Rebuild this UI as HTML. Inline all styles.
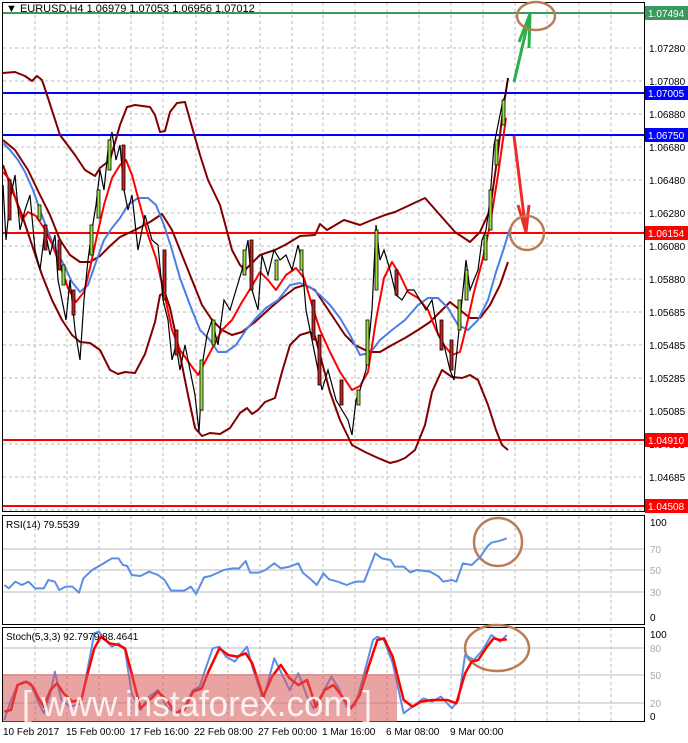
<!DOCTYPE html>
<html><head><meta charset="utf-8"><style>
html,body{margin:0;padding:0;background:#fff;}
body{width:688px;height:743px;position:relative;overflow:hidden;font-family:"Liberation Sans",sans-serif;}
svg{position:absolute;left:0;top:0;}
text{font-family:"Liberation Sans",sans-serif;}
</style></head><body>
<svg width="688" height="743" viewBox="0 0 688 743">
<rect x="2.5" y="2.5" width="642" height="509" fill="#fff" stroke="#000"/>
<rect x="2.5" y="515.5" width="642" height="109" fill="#fff" stroke="#000"/>
<rect x="2.5" y="627.5" width="642" height="94" fill="#fff" stroke="#000"/>
<g stroke="#bbb" stroke-dasharray="3,3" stroke-width="1">
<path d="M35 3V511M67 3V511M99 3V511M131 3V511M163 3V511M196 3V511M228 3V511M260 3V511M292 3V511M323 3V511M355 3V511M387 3V511M419 3V511M451 3V511M483 3V511M515 3V511M547 3V511M579 3V511M611 3V511"/>
<path d="M3 48H644M3 81H644M3 114H644M3 147H644M3 180H644M3 213H644M3 246H644M3 279H644M3 312H644M3 345H644M3 378H644M3 411H644M3 444H644M3 477H644M3 510H644"/>
<path d="M35 516V624M67 516V624M99 516V624M131 516V624M163 516V624M196 516V624M228 516V624M260 516V624M292 516V624M323 516V624M355 516V624M387 516V624M419 516V624M451 516V624M483 516V624M515 516V624M547 516V624M579 516V624M611 516V624"/>
<path d="M35 628V721M67 628V721M99 628V721M131 628V721M163 628V721M196 628V721M228 628V721M260 628V721M292 628V721M323 628V721M355 628V721M387 628V721M419 628V721M451 628V721M483 628V721M515 628V721M547 628V721M579 628V721M611 628V721"/>
</g>
<g stroke="#bbb" stroke-width="1">
<path d="M3 549H644M3 570H644M3 592H644M3 648H644M3 675H644M3 703H644"/>
</g>
<line x1="3" y1="13" x2="644" y2="13" stroke="#3a9a5e" stroke-width="2"/>
<line x1="3" y1="93" x2="644" y2="93" stroke="#0000ff" stroke-width="2"/>
<line x1="3" y1="135" x2="644" y2="135" stroke="#0000ff" stroke-width="2"/>
<line x1="3" y1="233" x2="644" y2="233" stroke="#ff0000" stroke-width="2"/>
<line x1="3" y1="440" x2="644" y2="440" stroke="#ff0000" stroke-width="2"/>
<line x1="3" y1="506" x2="644" y2="506" stroke="#ff0000" stroke-width="2"/>
<g fill="none" stroke-width="2" stroke-linejoin="round">
<polyline stroke="#800000" points="3,73 15,72 25,76 32,81 37,76 42,80 47,95 60,135 75,155 85,170 95,176 100,168 110,160 120,125 127,107 135,105 150,107 155,115 160,132 165,131 170,112 177,103 185,102 190,120 200,155 208,180 220,205 232,250 240,265 245,270 260,255 275,250 285,245 300,236 315,235 320,224 327,230 344,220 360,225 372,220 385,215 395,212 410,205 425,198 440,215 455,232 470,242 480,232 490,210 497,160 503,110 508,78"/>
<polyline stroke="#800000" points="3,140 15,150 28,170 40,195 50,215 60,240 70,255 80,262 90,262 100,256 110,246 120,237 135,230 150,222 162,214 172,230 182,255 192,280 202,305 212,320 222,330 232,335 242,332 255,322 268,310 282,298 295,288 305,285 315,290 325,305 335,320 345,335 355,345 365,350 372,352 380,352 392,345 405,338 418,330 430,322 440,312 450,302 460,310 470,318 480,318 490,305 500,285 508,262"/>
<polyline stroke="#800000" points="3,165 12,190 22,215 32,245 42,275 52,300 62,320 72,335 80,342 90,343 100,350 110,370 118,374 125,372 135,373 145,354 155,322 160,295 165,293 170,308 178,345 188,395 195,428 202,436 210,433 220,434 230,428 240,413 247,408 252,414 258,410 265,402 275,398 282,372 290,345 300,335 310,332 315,336 320,355 330,392 340,420 352,445 365,452 378,458 390,463 398,461 405,458 415,450 425,425 432,392 442,370 452,377 462,378 470,375 478,380 488,405 496,430 502,445 508,450"/>
<polyline stroke="#4a7ee8" points="3,143 10,150 18,160 25,172 33,190 40,210 48,232 56,250 64,265 72,282 80,292 88,285 96,262 104,240 112,228 120,218 128,205 138,198 148,198 156,205 164,225 172,250 180,278 190,305 200,330 210,340 218,352 226,352 236,345 246,330 256,318 266,308 278,300 290,285 300,283 310,287 320,295 330,305 340,318 350,335 360,355 370,353 380,340 392,330 405,320 418,305 428,298 438,298 448,308 458,325 468,330 478,320 488,300 496,272 504,248 510,228"/>
<polyline stroke="#ff0000" points="3,172 10,180 16,200 22,220 28,212 36,216 44,228 52,244 60,265 68,288 76,302 84,292 90,268 96,240 104,205 112,178 120,165 126,160 132,175 140,205 148,235 156,258 164,292 172,330 180,350 190,364 198,375 206,360 214,345 222,330 232,320 242,302 252,286 260,272 268,280 276,290 286,275 296,268 304,278 312,305 320,330 330,352 340,372 352,390 360,386 368,372 376,320 384,278 392,262 400,275 408,292 418,298 428,310 436,330 444,345 452,355 460,352 466,328 474,292 482,262 490,225 498,175 506,118"/>
</g>
<polyline fill="none" stroke="#000" stroke-width="1.2" points="3,185 6,240 10,200 15,175 20,230 25,210 30,195 35,250 40,270 45,230 50,255 55,235 58,280 62,300 66,320 70,280 75,330 80,360 84,300 88,260 92,230 96,205 100,170 104,190 108,150 112,132 116,160 120,145 124,190 128,210 132,195 138,250 145,215 152,240 158,245 163,300 168,320 172,360 176,345 180,370 185,345 190,370 195,395 199,432 203,360 207,335 212,320 218,345 224,300 230,310 236,290 242,270 248,240 252,290 258,310 262,255 268,275 274,250 280,260 286,255 292,270 298,245 302,262 306,310 312,340 316,360 322,390 328,370 332,385 336,400 342,410 348,420 352,435 356,400 360,390 366,370 372,310 376,225 380,260 384,250 390,270 396,295 402,300 408,290 414,290 420,300 426,310 432,300 438,335 444,345 450,370 454,380 458,340 462,300 466,260 470,290 474,280 478,270 482,240 486,230 490,200 494,145 498,125 502,105 506,92 508,78"/>
<g fill="#9be03c" stroke="#000" stroke-width="0.8">
<rect x="38" y="205" width="3" height="15"/><rect x="62" y="265" width="3" height="20"/><rect x="90" y="225" width="3" height="30"/><rect x="97" y="190" width="3" height="28"/><rect x="108" y="140" width="3" height="30"/><rect x="200" y="360" width="3" height="50"/><rect x="212" y="320" width="3" height="25"/><rect x="243" y="250" width="3" height="25"/><rect x="275" y="260" width="3" height="20"/><rect x="300" y="250" width="3" height="20"/><rect x="357" y="390" width="3" height="15"/><rect x="366" y="320" width="3" height="45"/><rect x="375" y="230" width="3" height="60"/><rect x="458" y="300" width="3" height="30"/><rect x="465" y="270" width="3" height="30"/><rect x="484" y="235" width="3" height="25"/><rect x="489" y="190" width="3" height="40"/><rect x="495" y="140" width="3" height="25"/><rect x="502" y="100" width="3" height="25"/>
</g>
<g fill="#c22" stroke="#000" stroke-width="0.8">
<rect x="8" y="180" width="3" height="40"/><rect x="44" y="225" width="3" height="25"/><rect x="58" y="240" width="3" height="30"/><rect x="72" y="290" width="3" height="25"/><rect x="122" y="145" width="3" height="45"/><rect x="163" y="250" width="3" height="50"/><rect x="175" y="330" width="3" height="25"/><rect x="250" y="240" width="3" height="50"/><rect x="312" y="300" width="3" height="40"/><rect x="318" y="335" width="3" height="50"/><rect x="340" y="380" width="3" height="25"/><rect x="395" y="270" width="3" height="25"/><rect x="440" y="320" width="3" height="30"/><rect x="450" y="340" width="3" height="30"/>
</g>
<g stroke="#2ab04a" stroke-width="3" fill="none"><line x1="514" y1="82" x2="530" y2="14"/><line x1="530" y1="14" x2="519" y2="42"/><line x1="530" y1="14" x2="529" y2="48"/></g>
<g stroke="#ee2a2a" stroke-width="3" fill="none"><line x1="514" y1="136" x2="526" y2="232"/><line x1="526" y1="232" x2="518" y2="205"/><line x1="526" y1="232" x2="529" y2="205"/></g>
<g stroke="#b97c55" stroke-width="2.5" fill="none">
<ellipse cx="536" cy="16" rx="19" ry="14"/>
<ellipse cx="527" cy="233" rx="17" ry="17"/>
<ellipse cx="498" cy="542" rx="24" ry="24"/>
<ellipse cx="497" cy="648" rx="32" ry="23"/>
</g>
<g transform="translate(0,500) scale(0.43878,0.33333)" fill="none" stroke-width="2" stroke-linejoin="round">
<polyline vector-effect="non-scaling-stroke" stroke="#5b8ee6" points="10,255 20,265 35,245 50,255 65,245 80,265 100,265 110,240 125,245 135,270 150,260 165,260 180,278 190,235 210,210 230,195 255,175 270,175 280,195 290,198 300,225 320,228 340,215 360,225 375,240 390,272 420,272 435,260 447,282 465,232 480,228 490,222 510,210 530,205 545,205 560,183 570,218 590,218 605,210 625,190 640,205 660,200 680,190 690,218 710,240 722,255 737,220 750,238 770,245 790,255 810,245 830,245 855,160 870,175 890,180 900,200 920,200 935,217 950,210 980,215 1000,230 1010,245 1030,240 1040,245 1055,190 1075,195 1095,170 1110,140 1120,128 1140,122 1155,115"/>
<polyline vector-effect="non-scaling-stroke" stroke="#5b8ee6" points="10,660 25,600 40,555 55,545 70,550 85,600 100,640 115,580 125,515 140,600 160,620 185,610 205,470 215,400 225,395 240,420 255,440 270,430 285,450 300,580 320,630 340,590 360,570 380,620 400,640 420,620 440,570 455,560 470,500 485,445 500,440 515,470 535,485 550,460 563,440 575,500 600,600 625,475 640,515 660,570 680,520 700,590 715,625 735,580 755,530 770,560 790,620 810,615 830,520 850,420 860,410 875,420 895,490 920,640 940,620 965,595 985,605 1005,590 1030,625 1045,600 1060,465 1080,480 1100,450 1120,405 1140,425 1155,405"/>
<polyline vector-effect="non-scaling-stroke" stroke="#ff0000" stroke-width="2.5" points="10,635 25,630 40,555 60,545 75,560 90,600 100,620 115,570 130,550 145,580 165,605 185,600 200,520 215,445 230,410 250,430 270,435 285,445 300,520 320,625 345,595 360,575 380,600 400,640 420,630 440,575 460,565 475,515 500,445 520,465 540,470 560,460 575,490 600,590 620,530 640,495 660,535 680,555 700,540 720,620 740,570 760,555 780,590 800,625 820,585 840,500 860,420 875,415 895,470 920,600 940,620 960,605 985,600 1005,600 1020,600 1040,610 1060,520 1075,485 1090,480 1110,440 1125,415 1140,420 1155,418"/>
</g>
<rect x="3" y="674" width="394" height="48" fill="#d85858" fill-opacity="0.55"/>
<text x="22" y="716" font-size="36" fill="#fff" fill-opacity="0.85" textLength="350" lengthAdjust="spacingAndGlyphs">[ www.instaforex.com ]</text>
<text x="6" y="12" font-size="11" fill="#000">▼ EURUSD,H4  1.06979 1.07053 1.06956 1.07012</text>
<text x="6" y="528" font-size="10" fill="#000">RSI(14) 79.5539</text>
<text x="6" y="640" font-size="10" fill="#000">Stoch(5,3,3) 92.7979 88.4641</text>
<g font-size="10" fill="#000">
<text x="649" y="52">1.07280</text><text x="649" y="85">1.07080</text><text x="649" y="118">1.06880</text><text x="649" y="151">1.06680</text><text x="649" y="184">1.06480</text><text x="649" y="217">1.06280</text><text x="649" y="250">1.06080</text><text x="649" y="283">1.05880</text><text x="649" y="316">1.05685</text><text x="649" y="349">1.05485</text><text x="649" y="382">1.05285</text><text x="649" y="415">1.05085</text><text x="649" y="448">1.04885</text><text x="649" y="481">1.04685</text>
<text x="650" y="526">100</text><text x="650" y="621">0</text><text x="650" y="638">100</text><text x="650" y="720">0</text>
</g>
<g font-size="10" fill="#aaa">
<text x="650" y="553">70</text><text x="650" y="574">50</text><text x="650" y="596">30</text>
<text x="650" y="652">80</text><text x="650" y="679">50</text><text x="650" y="707">20</text>
</g>
<rect x="645" y="6" width="43" height="14" fill="#3a9a5e"/><text x="648" y="17" font-size="10" fill="#fff">1.07494</text>
<rect x="645" y="86" width="43" height="14" fill="#0000ff"/><text x="648" y="97" font-size="10" fill="#fff">1.07005</text>
<rect x="645" y="128" width="43" height="14" fill="#0000ff"/><text x="648" y="139" font-size="10" fill="#fff">1.06750</text>
<rect x="645" y="226" width="43" height="14" fill="#ff0000"/><text x="648" y="237" font-size="10" fill="#fff">1.06154</text>
<rect x="645" y="433" width="43" height="14" fill="#ff0000"/><text x="648" y="444" font-size="10" fill="#fff">1.04910</text>
<rect x="645" y="499" width="43" height="14" fill="#ff0000"/><text x="648" y="510" font-size="10" fill="#fff">1.04508</text>
<g font-size="10" fill="#000">
<text x="3" y="735">10 Feb 2017</text><text x="66" y="735">15 Feb 00:00</text><text x="130" y="735">17 Feb 16:00</text><text x="194" y="735">22 Feb 08:00</text><text x="258" y="735">27 Feb 00:00</text><text x="322" y="735">1 Mar 16:00</text><text x="386" y="735">6 Mar 08:00</text><text x="450" y="735">9 Mar 00:00</text>
</g>
</svg>
</body></html>
